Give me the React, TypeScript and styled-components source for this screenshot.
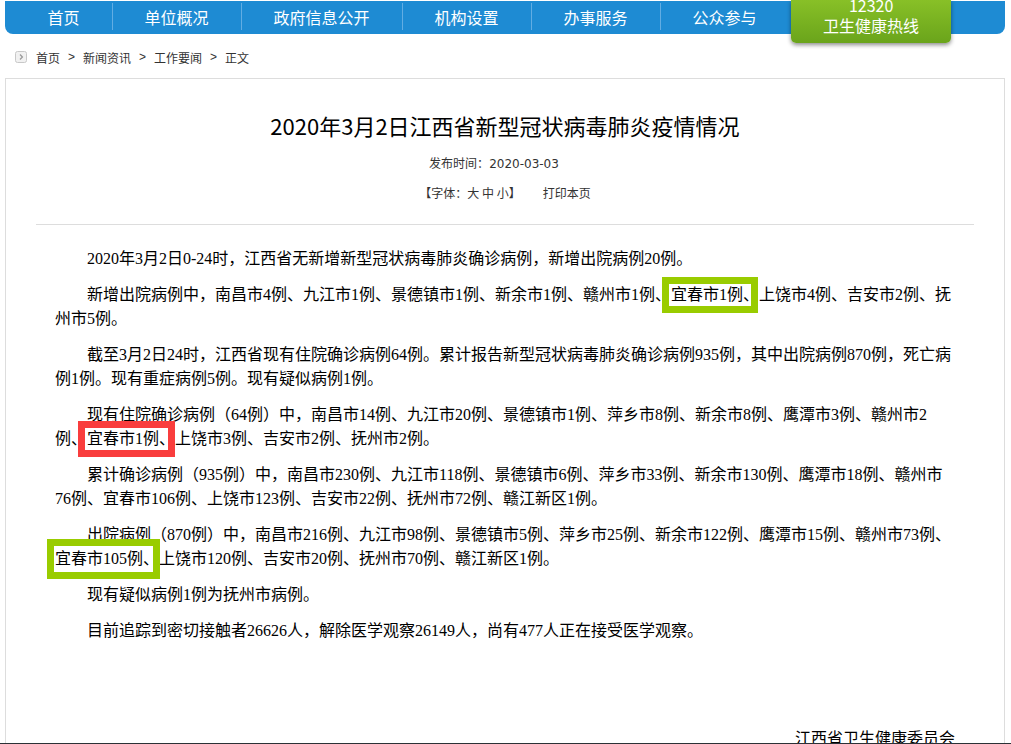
import React from 'react';
import styled, { createGlobalStyle } from 'styled-components';

const GlobalStyle = createGlobalStyle`
  html, body {
    margin: 0;
    padding: 0;
    background: #fff;
  }
  body {
    font-family: "Noto Sans CJK SC", sans-serif;
    color: #333;
    text-spacing-trim: space-all;
    text-autospace: no-autospace;
  }
`;

const Page = styled.div`
  width: 1000px;
  margin-left: 5px;
`;

const NavBar = styled.nav`
  display: flex;
  align-items: flex-start;
  height: 33px;
  margin-top: 1px;
  padding-left: 10px;
  background: #1e8bd3;
  border-radius: 0 0 8px 8px;
`;

const NavItem = styled.a`
  position: relative;
  display: block;
  padding: 0 32.5px;
  line-height: 33px;
  font-size: 16px;
  color: #fff;
  text-decoration: none;
  white-space: nowrap;

  & + &::before {
    content: '';
    position: absolute;
    left: 0;
    top: 2px;
    width: 1px;
    height: 27px;
    background: #62ade3;
  }
`;

const Hotline = styled.a`
  display: flex;
  flex-direction: column;
  justify-content: flex-end;
  align-items: center;
  box-sizing: border-box;
  width: 160px;
  height: 43px;
  margin: -1px 0 0 2px;
  padding-bottom: 8px;
  overflow: hidden;
  background: linear-gradient(#88c027, #6aa41b);
  border-radius: 0 0 5px 5px;
  box-shadow: 0 2px 4px rgba(0, 0, 0, 0.45);
  color: #fff;
  font-size: 16px;
  line-height: 20px;
  text-decoration: none;
`;

const Crumbs = styled.div`
  display: flex;
  align-items: center;
  box-sizing: border-box;
  height: 44px;
  padding: 2px 0 0 10px;
  font-size: 12px;
  color: #333;
`;

const CrumbIcon = styled.svg`
  margin-right: 9px;
`;

const CrumbSep = styled.span`
  margin: 0 8px;
  font-family: "Liberation Sans", sans-serif;
`;

const Panel = styled.article`
  border: 1px solid #ddd;
  border-bottom: none;
  padding-top: 26px;
  min-height: 700px;
`;

const Title = styled.h1`
  margin: 0;
  font-size: 22px;
  font-weight: normal;
  line-height: 40px;
  color: #000;
  text-align: center;
`;

const Meta = styled.div`
  margin-top: 8px;
  padding-right: 22px;
  font-size: 12px;
  line-height: 20px;
  text-align: center;
  color: #333;
`;

const Date = styled.span`
  font-family: "DejaVu Sans", sans-serif;
`;

const Tools = styled.div`
  margin-top: 9px;
  font-size: 12px;
  line-height: 20px;
  text-align: center;
  color: #333;
`;

const PrintLink = styled.a`
  margin-left: 22px;
  color: #333;
  text-decoration: none;
`;

const Rule = styled.div`
  height: 1px;
  margin: 21px 30px 0;
  background: #ddd;
`;

const Body = styled.div`
  padding: 22px 49px 0;
  font-family: "Liberation Serif", "Noto Sans CJK SC", serif;
  font-size: 16px;
  line-height: 24px;
  color: #000;
`;

const Para = styled.p`
  margin: 0 0 12px;
  text-indent: 32px;
`;

const Signature = styled.p`
  margin: 84px 0 0;
  text-align: right;
`;

const Mark = styled.span<{ $color: string; $left: number; $right: number; $height: number }>`
  position: relative;

  &::after {
    content: '';
    position: absolute;
    left: ${p => -p.$left}px;
    right: ${p => p.$right}px;
    top: 50%;
    height: ${p => p.$height}px;
    margin-top: ${p => -p.$height / 2}px;
    box-sizing: border-box;
    border: 7px solid ${p => p.$color};
    pointer-events: none;
  }
`;

const ScreenEdge = styled.div`
  position: fixed;
  left: 0;
  right: 0;
  bottom: 0;
  height: 1px;
  background: #2b3136;
`;

const navLinks = ['首页', '单位概况', '政府信息公开', '机构设置', '办事服务', '公众参与'];
const crumbs = ['首页', '新闻资讯', '工作要闻', '正文'];

const GREEN = '#99cc00';
const RED = '#f93d3d';

export default function App() {
  return (
    <>
      <GlobalStyle />
      <Page>
        <NavBar>
          {navLinks.map(label => (
            <NavItem key={label} href="#">{label}</NavItem>
          ))}
          <Hotline href="#">
            <span>12320</span>
            <span>卫生健康热线</span>
          </Hotline>
        </NavBar>

        <Crumbs>
          <CrumbIcon width="12" height="12" viewBox="0 0 12 12">
            <rect x="0.5" y="0.5" width="11" height="11" rx="2" fill="#f1f1f1" stroke="#c8c8c8" />
            <path d="M5 3.5 L7.4 6 L5 8.5" fill="none" stroke="#9a9a9a" strokeWidth="1.3" />
          </CrumbIcon>
          {crumbs.map((c, i) => (
            <React.Fragment key={c}>
              {i > 0 && <CrumbSep>&gt;</CrumbSep>}
              <span>{c}</span>
            </React.Fragment>
          ))}
        </Crumbs>

        <Panel>
          <Title>2020年3月2日江西省新型冠状病毒肺炎疫情情况</Title>
          <Meta>
            发布时间：<Date>2020-03-03</Date>
          </Meta>
          <Tools>
            【字体：大 中 小】
            <PrintLink href="#">打印本页</PrintLink>
          </Tools>
          <Rule />

          <Body>
            <Para>2020年3月2日0-24时，江西省无新增新型冠状病毒肺炎确诊病例，新增出院病例20例。</Para>
            <Para>
              新增出院病例中，南昌市4例、九江市1例、景德镇市1例、新余市1例、赣州市1例、
              <Mark $color={GREEN} $left={9} $right={1} $height={36}>宜春市1例、</Mark>
              上饶市4例、吉安市2例、抚州市5例。
            </Para>
            <Para>截至3月2日24时，江西省现有住院确诊病例64例。累计报告新型冠状病毒肺炎确诊病例935例，其中出院病例870例，死亡病例1例。现有重症病例5例。现有疑似病例1例。</Para>
            <Para>
              现有住院确诊病例（64例）中，南昌市14例、九江市20例、景德镇市1例、萍乡市8例、新余市8例、鹰潭市3例、赣州市2例、
              <Mark $color={RED} $left={9} $right={0} $height={36}>宜春市1例、</Mark>
              上饶市3例、吉安市2例、抚州市2例。
            </Para>
            <Para>累计确诊病例（935例）中，南昌市230例、九江市118例、景德镇市6例、萍乡市33例、新余市130例、鹰潭市18例、赣州市76例、宜春市106例、上饶市123例、吉安市22例、抚州市72例、赣江新区1例。</Para>
            <Para>
              出院病例（870例）中，南昌市216例、九江市98例、景德镇市5例、萍乡市25例、新余市122例、鹰潭市15例、赣州市73例、
              <Mark $color={GREEN} $left={8} $right={-1} $height={40}>宜春市105例、</Mark>
              上饶市120例、吉安市20例、抚州市70例、赣江新区1例。
            </Para>
            <Para>现有疑似病例1例为抚州市病例。</Para>
            <Para>目前追踪到密切接触者26626人，解除医学观察26149人，尚有477人正在接受医学观察。</Para>
            <Signature>江西省卫生健康委员会</Signature>
          </Body>
        </Panel>
      </Page>
      <ScreenEdge />
    </>
  );
}
